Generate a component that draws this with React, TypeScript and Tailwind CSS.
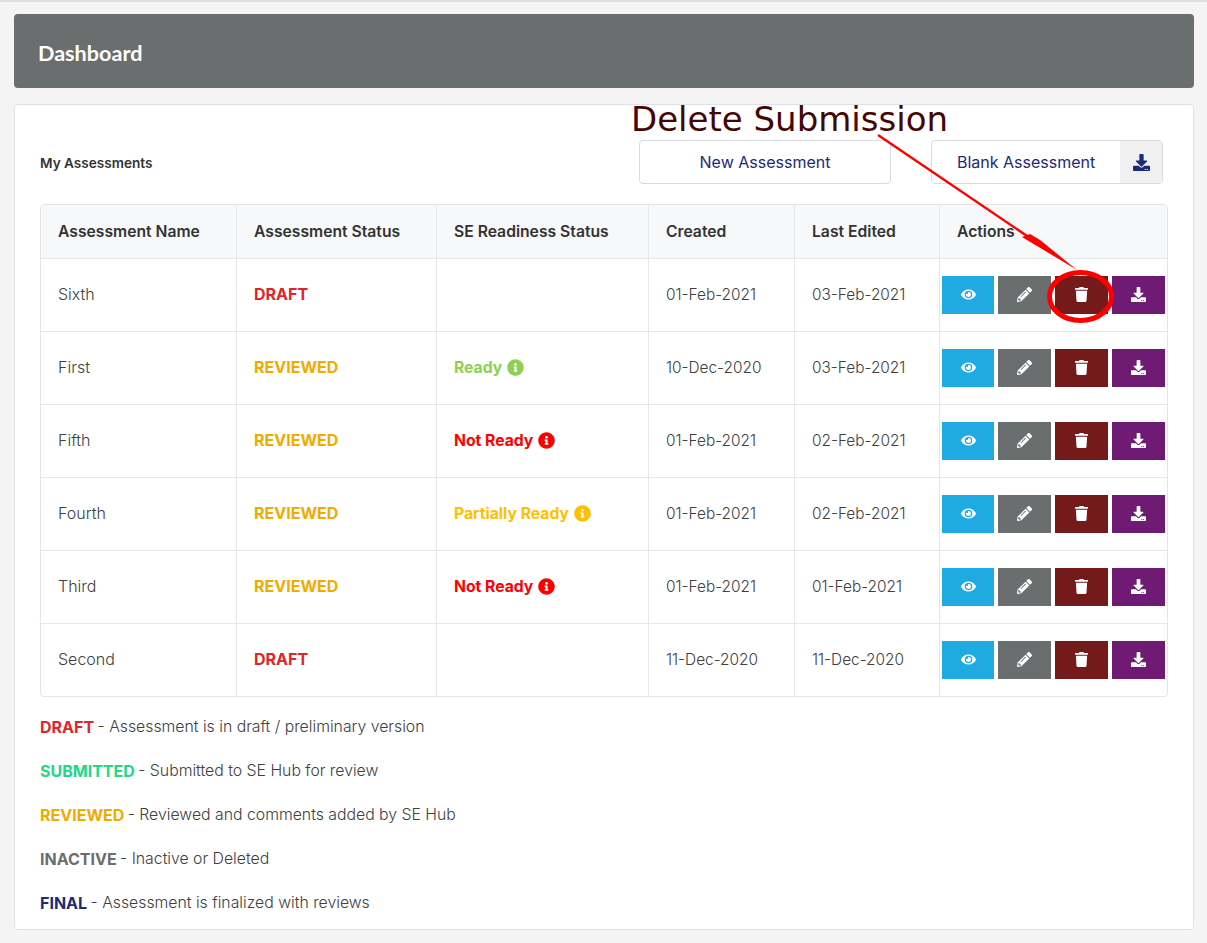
import { FaEye, FaPencilAlt, FaTrash, FaDownload, FaInfoCircle } from "react-icons/fa";

const rows = [
  { name: "Sixth", status: "DRAFT", se: "", created: "01-Feb-2021", edited: "03-Feb-2021" },
  { name: "First", status: "REVIEWED", se: "Ready", created: "10-Dec-2020", edited: "03-Feb-2021" },
  { name: "Fifth", status: "REVIEWED", se: "Not Ready", created: "01-Feb-2021", edited: "02-Feb-2021" },
  { name: "Fourth", status: "REVIEWED", se: "Partially Ready", created: "01-Feb-2021", edited: "02-Feb-2021" },
  { name: "Third", status: "REVIEWED", se: "Not Ready", created: "01-Feb-2021", edited: "01-Feb-2021" },
  { name: "Second", status: "DRAFT", se: "", created: "11-Dec-2020", edited: "11-Dec-2020" },
];

const seClass: Record<string, string> = {
  Ready: "text-[#8fd053]",
  "Not Ready": "text-[#ff0000]",
  "Partially Ready": "text-[#ffbf00]",
};

const legend = [
  { k: "DRAFT", c: "text-[#e0242b]", t: "Assessment is in draft / preliminary version" },
  { k: "SUBMITTED", c: "text-[#22d886]", t: "Submitted to SE Hub for review" },
  { k: "REVIEWED", c: "text-[#f0ab00]", t: "Reviewed and comments added by SE Hub" },
  { k: "INACTIVE", c: "text-[#6b6e6e]", t: "Inactive or Deleted" },
  { k: "FINAL", c: "text-[#1c2a78]", t: "Assessment is finalized with reviews" },
];

const cols = "grid grid-cols-[196px_200px_212px_146px_145px_228px]";
const cell = "flex items-center pl-[17px] border-r border-[#e6e7ea]";
const btn = "h-[38px] pb-[2px] flex items-center justify-center text-white text-[15px]";

function Actions() {
  return (
    <div className="flex items-center gap-1 pl-[2px]">
      <div className={`${btn} w-[52px] bg-[#1fabe2]`}><FaEye /></div>
      <div className={`${btn} w-[53px] bg-[#6b6e6e]`}><FaPencilAlt /></div>
      <div className={`${btn} w-[53px] bg-[#741a1a]`}><FaTrash /></div>
      <div className={`${btn} w-[53px] bg-[#6f1a73]`}><FaDownload /></div>
    </div>
  );
}

export default function App() {
  return (
    <div className="relative min-h-[943px] overflow-hidden bg-[#f4f4f5] border-t-2 border-[#dfdfe6] pl-[14px] pr-[13px] pt-[12px] font-['Inter',sans-serif] text-[16px] font-light text-[#404040]">
      <div className="h-[74px] rounded bg-[#6b6e6e] flex items-center pl-[24px] pt-[4px] text-white text-[21.6px] font-bold font-['Lato',sans-serif]">Dashboard</div>

      <div className="mt-4 h-[826px] rounded border border-[#dde1e8] bg-white pl-[25px] pr-[25px]">
        <div className="h-[99px] flex items-start">
          <div className="mt-[50px] text-[13.6px] font-semibold text-[#333] leading-[17px]">My Assessments</div>
          <div className="ml-auto mt-[35px] w-[252px] h-[44px] rounded border border-[#d9dbe0] flex items-center justify-center text-[16px] font-normal text-[#1c2a78]">New Assessment</div>
          <div className="ml-[40px] mr-[5px] mt-[35px] w-[232px] h-[44px] rounded border border-[#d9dbe0] flex overflow-hidden text-[16px] font-normal text-[#1c2a78]">
            <div className="flex-1 flex items-center pl-[25px]">Blank Assessment</div>
            <div className="w-[42px] bg-[#f0f0f1] flex items-center justify-center text-[17px]"><FaDownload /></div>
          </div>
        </div>

        <div className="w-[1128px] rounded border border-[#e2e4e8] overflow-hidden">
          <div className={`${cols} h-[54px] bg-[#f7f8fa] border-b border-[#e6e7ea] text-[15.7px] font-semibold text-[#333]`}>
            <div className={cell}>Assessment Name</div>
            <div className={cell}>Assessment Status</div>
            <div className={cell}>SE Readiness Status</div>
            <div className={cell}>Created</div>
            <div className={cell}>Last Edited</div>
            <div className="flex items-center pl-[17px]">Actions</div>
          </div>
          {rows.map((r, i) => (
            <div key={r.name} className={`${cols} ${i < 5 ? "h-[73px] border-b border-[#e6e7ea]" : "h-[72px]"}`}>
              <div className={`${cell} pb-[2px]`}>{r.name}</div>
              <div className={`${cell} pb-[2px] font-bold ${r.status === "DRAFT" ? "text-[#e0242b]" : "text-[#f0ab00]"}`}>{r.status}</div>
              <div className={`${cell} pb-[1px] text-[15.7px] font-bold ${seClass[r.se] ?? ""}`}>
                {r.se}
                {r.se && <FaInfoCircle className="ml-[5px] mb-[1px] text-[17px]" />}
              </div>
              <div className={`${cell} text-[15.4px]`}>{r.created}</div>
              <div className={`${cell} text-[15.4px]`}>{r.edited}</div>
              <Actions />
            </div>
          ))}
        </div>

        <div className="mt-[8px]">
          {legend.map((l) => (
            <div key={l.k} className="h-[44px] pb-[1px] flex items-center">
              <span className={`font-bold ${l.c}`}>{l.k}</span>
              <span className="whitespace-pre text-[15.8px] -ml-[1px]"> - {l.t}</span>
            </div>
          ))}
        </div>
      </div>

      <div className="absolute left-[631px] top-[95px] font-['DejaVu_Sans',sans-serif] font-normal text-[34px] leading-[44px] text-[#450505] whitespace-nowrap">Delete Submission</div>
      <svg className="absolute left-0 top-0 pointer-events-none" width="1207" height="943" viewBox="0 0 1207 943" fill="none">
        <line x1="878" y1="133" x2="1030" y2="236" stroke="#ff0000" strokeWidth="2.4" />
        <polygon points="1077,268 1022,235 1030,232 1040,238" fill="#ff0000" />
        <ellipse cx="1080.5" cy="294.5" rx="31" ry="24" stroke="#ff0000" strokeWidth="5" />
      </svg>
    </div>
  );
}
